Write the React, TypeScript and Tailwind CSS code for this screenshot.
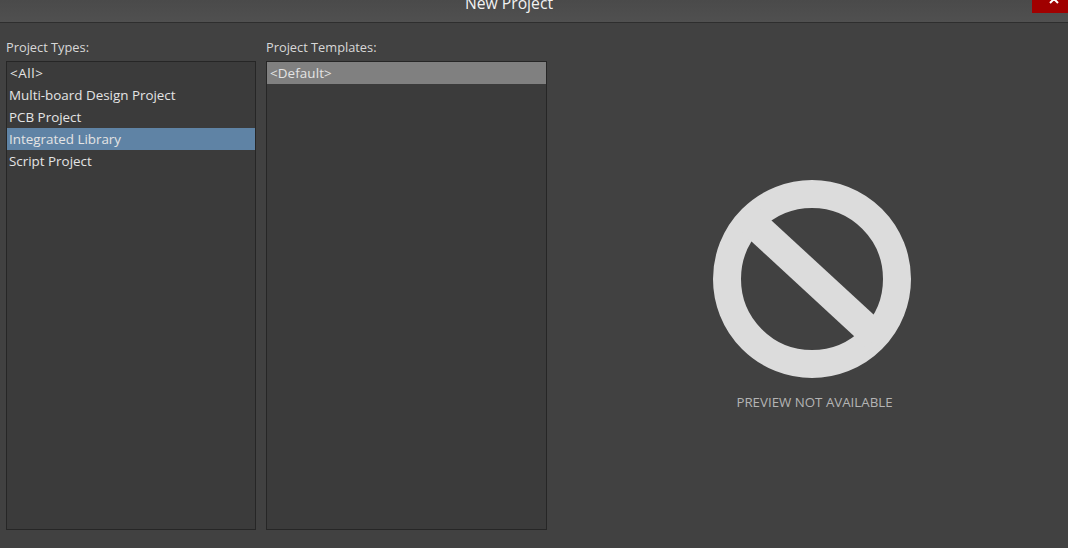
const types = ["<All>", "Multi-board Design Project", "PCB Project", "Integrated Library", "Script Project"];

const font = "font-['Open_Sans',sans-serif]";

const ListRow = ({ label, selected }: { label: string; selected?: string }) => (
  <div className={`flex h-[22px] items-center pt-[1px] text-[13.4px] leading-none text-[#e4e4e4] ${selected ?? "pl-[2px]"}`}>
    {label}
  </div>
);

const App = () => {
  return (
    <div className={`flex h-[548px] w-[1068px] flex-col overflow-hidden bg-[#414141] ${font}`}>
      <header className="flex h-[23px] shrink-0 overflow-hidden border-b border-[#2e2e2e] bg-gradient-to-b from-[#4a4a4a] to-[#505050]">
        <div className="-mt-[8px] flex w-[1018px] justify-center text-[15.7px] leading-[22px] text-[#f2f2f2]">New Project</div>
        <div className="ml-auto flex h-[13px] w-[36px] justify-center overflow-hidden bg-[#a00000] pl-[8px]">
          <svg width="10" height="10" viewBox="0 0 10 10" className="-mt-[6px]">
            <path d="M1 1 9 9M9 1 1 9" stroke="#ffffff" strokeWidth="2" fill="none" />
          </svg>
        </div>
      </header>

      <main className="flex flex-1 pl-[6px] pt-[15px] pb-[18px]">
        <section className="flex w-[250px] flex-col">
          <h2 className="mb-[4px] h-[19px] text-[12.8px] font-normal leading-[19px] text-[#d8d8d8]">Project Types:</h2>
          <div className="flex-1 border border-[#262626] bg-[#3b3b3b]">
            {types.map((t) => (
              <ListRow
                key={t}
                label={t}
                selected={
                  t === "Integrated Library"
                    ? "pl-[2px] bg-[#5f83a5]"
                    : t === "<All>"
                      ? "pl-[3px] tracking-[0.6px]"
                      : "pl-[2px]"
                }
              />
            ))}
          </div>
        </section>

        <section className="ml-[10px] flex w-[281px] flex-col">
          <h2 className="mb-[4px] h-[19px] text-[12.8px] font-normal leading-[19px] text-[#d8d8d8]">Project Templates:</h2>
          <div className="flex-1 border border-[#262626] bg-[#3b3b3b]">
            <ListRow label="<Default>" selected="pl-[3px] tracking-[0.1px] bg-[#808080]" />
          </div>
        </section>

        <section className="flex flex-1 flex-col items-center pl-[8px] pt-[142px]">
          <svg width="198" height="198" viewBox="0 0 198 198">
            <circle cx="99" cy="99" r="85" fill="none" stroke="#dcdcdc" strokeWidth="28" />
            <path d="M35 38.5 163.5 157" stroke="#dcdcdc" strokeWidth="29" fill="none" />
          </svg>
          <p className="ml-[6px] mt-[15px] text-[13.3px] leading-[18px] text-[#b4b4b4]">PREVIEW NOT AVAILABLE</p>
        </section>
      </main>
    </div>
  );
};

export default App;
